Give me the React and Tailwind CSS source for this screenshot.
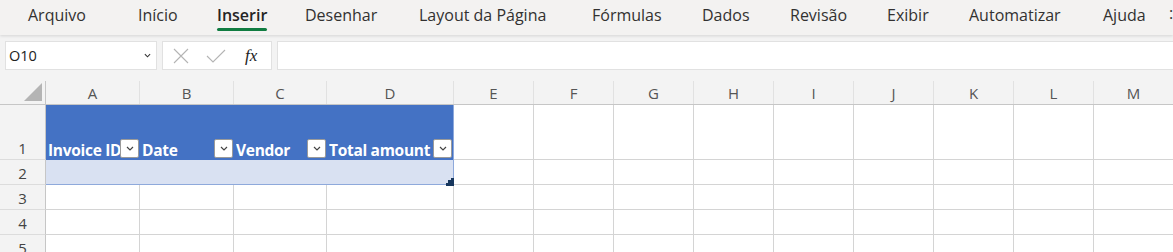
import React from "react";

const tabs = [
  { label: "Arquivo", w: "w-[110px]" },
  { label: "Início", w: "w-[79px]" },
  { label: "Inserir", w: "w-[88px]", active: true },
  { label: "Desenhar", w: "w-[114px]" },
  { label: "Layout da Página", w: "w-[173px]" },
  { label: "Fórmulas", w: "w-[110px]" },
  { label: "Dados", w: "w-[88px]" },
  { label: "Revisão", w: "w-[97px]" },
  { label: "Exibir", w: "w-[82px]" },
  { label: "Automatizar", w: "w-[134px]" },
  { label: "Ajuda", w: "w-[66px]" },
];

const cols = ["A", "B", "C", "D", "E", "F", "G", "H", "I", "J", "K", "L", "M"];
const gridCols = "grid grid-cols-[46px_94px_94px_93px_127px_80px_80px_80px_80px_80px_80px_80px_80px_80px]";
const headers = ["Invoice ID", "Date", "Vendor", "Total amount"];

function Chevron({ className }) {
  return (
    <svg viewBox="0 0 8 5" className={className} fill="none" stroke="currentColor" strokeWidth="1.2">
      <path d="M1 1l3 3 3-3" />
    </svg>
  );
}

function FilterButton() {
  return (
    <div className="shrink-0 w-[19px] h-[19px] bg-white border border-[#9a9a9a] rounded-[2px] flex items-center justify-center text-[#444]">
      <Chevron className="w-[8px] h-[5px]" />
    </div>
  );
}

function RowHead({ n, tall }) {
  return (
    <div className={`${tall ? "h-[55px]" : "h-[25px]"} bg-[#f3f3f3] border-r border-b border-[#dcdcdc] border-r-[#c6c6c6] flex items-end justify-center text-[15px] leading-[22px] text-[#444]`}>
      {n}
    </div>
  );
}

export default function App() {
  return (
    <div className="w-[1173px] h-[252px] overflow-hidden bg-white font-['Open_Sans',sans-serif] text-[#323130]">
      {/* tabs */}
      <div className="relative z-10 h-[35px] bg-[#f3f2f1] shadow-[0_1px_3px_rgba(0,0,0,0.13)] flex pl-[28px] pt-[3px] whitespace-nowrap">
        {tabs.map((t) => (
          <div key={t.label} className={`${t.w} shrink-0`}>
            <div className="inline-flex flex-col">
              <span className={`text-[16px] leading-[20px] ${t.active ? "font-semibold text-[#242424]" : "text-[#323130]"}`}>{t.label}</span>
              {t.active && <span className="mt-[3px] h-[3px] rounded-full bg-[#107c41]" />}
            </div>
          </div>
        ))}
        <span className="text-[16px] leading-[20px]">:</span>
      </div>

      {/* formula bar */}
      <div className="h-[41px] bg-[#f3f3f3] flex items-start pt-[6px] gap-[5px] pl-[5px]">
        <div className="w-[152px] h-[29px] bg-white border border-[#e1e1e1] flex items-center justify-between pl-[3px] pr-[5px]">
          <span className="text-[14.5px] text-[#222]">O10</span>
          <Chevron className="w-[7px] h-[5px] text-[#333]" />
        </div>
        <div className="w-[110px] h-[29px] bg-white border border-[#e1e1e1] flex items-center pl-[10px]">
          <svg viewBox="0 0 16 16" className="w-[16px] h-[16px] text-[#b4b4b4]" stroke="currentColor" strokeWidth="1.1" fill="none">
            <path d="M1 1l14 14M15 1L1 15" />
          </svg>
          <svg viewBox="0 0 20 14" className="ml-[17px] w-[20px] h-[14px] text-[#b4b4b4]" stroke="currentColor" strokeWidth="1.1" fill="none">
            <path d="M1 7l6 6L19 1" />
          </svg>
          <span className="ml-[19px] font-['Liberation_Serif',serif] italic text-[17px] text-[#222]">fx</span>
        </div>
        <div className="flex-1 h-[29px] bg-white border border-[#e1e1e1] border-r-0" />
      </div>

      {/* column headers */}
      <div className={`${gridCols} h-[29px] bg-[#f3f3f3] border-b border-[#c6c6c6]`}>
        <div className="border-r border-[#c6c6c6] flex items-end justify-end pr-[3px] pb-[3px] mt-[5px]">
          <div className="w-[18px] h-[18px] bg-[#b4b4b4] [clip-path:polygon(100%_0,100%_100%,0_100%)]" />
        </div>
        {cols.map((c) => (
          <div key={c} className="mt-[5px] border-r border-[#e1e1e1] flex items-center justify-center text-[15px] text-[#555] leading-[22px]">
            {c}
          </div>
        ))}
      </div>

      {/* body */}
      <div className={gridCols}>
        {/* row 1 */}
        <RowHead n="1" tall />
        {headers.map((h, i) => (
          <div key={h} className={`h-[55px] bg-[#4472c4] flex items-end pl-[2px] pr-[1px] pb-[2px] ${i === 3 ? "border-r border-[#8ea9db] pr-[1px]" : ""}`}>
            <span className="flex-1 min-w-0 overflow-hidden whitespace-nowrap text-white font-bold text-[15.5px] leading-[20px] tracking-[-0.3px] mb-[-2px]">{h}</span>
            <FilterButton />
          </div>
        ))}
        {cols.slice(4).map((c) => (
          <div key={"r1" + c} className="h-[55px] border-r border-b border-[#d4d4d4]" />
        ))}

        {/* row 2 */}
        <RowHead n="2" />
        {[0, 1, 2, 3].map((i) => (
          <div key={"r2" + i} className={`relative h-[25px] bg-[#d9e1f2] border-b border-[#8ea9db] ${i === 3 ? "border-r" : ""}`}>
            {i === 3 && (
              <>
                <div className="absolute right-[-1px] bottom-[-2px] w-[3px] h-[8px] bg-[#17375e]" />
                <div className="absolute right-[-1px] bottom-[-2px] w-[8px] h-[3px] bg-[#17375e]" />
                <div className="absolute right-[-1px] bottom-[-2px] w-[6px] h-[6px] bg-[#17375e]" />
              </>
            )}
          </div>
        ))}
        {cols.slice(4).map((c) => (
          <div key={"r2" + c} className="h-[25px] border-r border-b border-[#d4d4d4]" />
        ))}

        {/* rows 3-5 */}
        {["3", "4", "5"].map((n) => (
          <React.Fragment key={n}>
            <RowHead n={n} />
            {cols.map((c) => (
              <div key={n + c} className="h-[25px] border-r border-b border-[#d4d4d4]" />
            ))}
          </React.Fragment>
        ))}
      </div>
    </div>
  );
}
